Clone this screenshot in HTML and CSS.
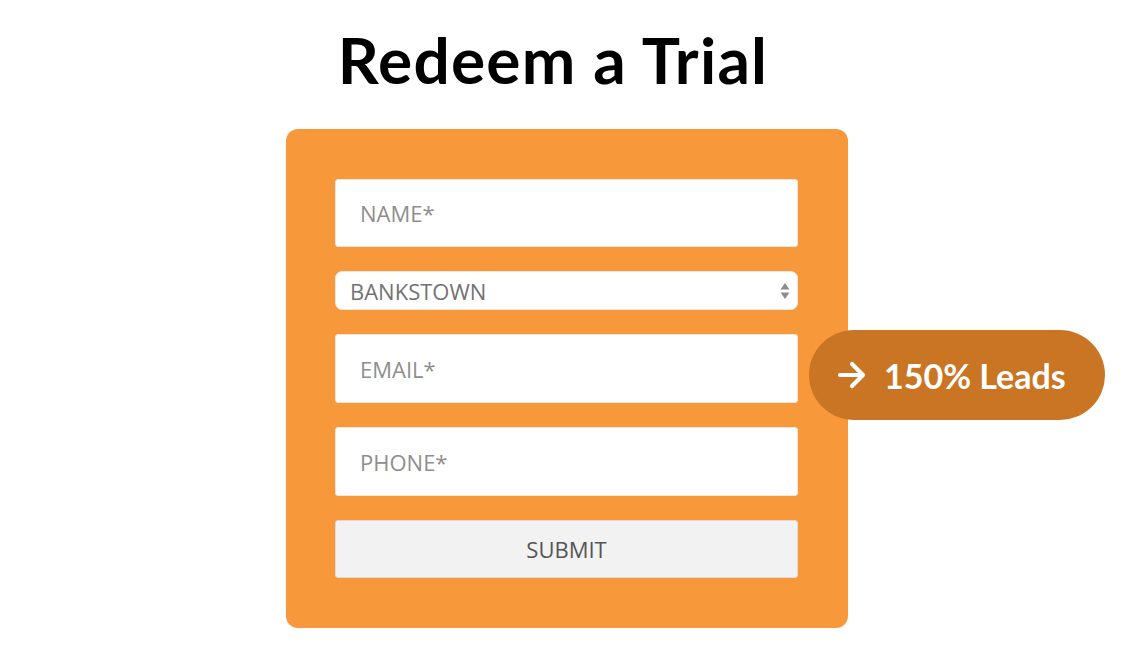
FILE: index.html
```html
<!DOCTYPE html>
<html lang="en">
<head>
    <meta charset="UTF-8">
    <meta name="viewport" content="width=device-width, initial-scale=1.0">
    <title>Redeem a Trial</title>
    <link rel="stylesheet" href="styles.css">
</head>
<body>
    <h1 class="title">Redeem a Trial</h1>
    <div class="card">
        <form class="trial-form" onsubmit="return false">
            <input class="field field-name" type="text" name="name" placeholder="NAME*">
            <div class="select-wrap">
                <select class="location" name="location">
                    <option>BANKSTOWN</option>
                </select>
                <svg class="select-arrows" width="10" height="18" viewBox="0 0 10 18">
                    <path d="M5 1 L9.5 7.5 L0.5 7.5 Z" fill="#8c8c8c"/>
                    <path d="M5 17 L9.5 10.5 L0.5 10.5 Z" fill="#8c8c8c"/>
                </svg>
            </div>
            <input class="field" type="email" name="email" placeholder="EMAIL*">
            <input class="field" type="tel" name="phone" placeholder="PHONE*">
            <button class="submit" type="submit">SUBMIT</button>
        </form>
        <!-- badge hangs over the right edge of the card -->
        <div class="leads-badge">
            <svg class="arrow" width="30" height="28" viewBox="0 0 30 28">
                <path d="M3 14 H26 M15 3 L26 14 L15 25" fill="none" stroke="#fff" stroke-width="4.2" stroke-linecap="round" stroke-linejoin="round"/>
            </svg>
            <span>150% Leads</span>
        </div>
    </div>
</body>
</html>
```

FILE: styles.css
```css
body {
    margin: 0;
    padding: 0;
    background-color: #fff;
    font-family: 'Open Sans', 'Liberation Sans', sans-serif;
    display: flex;
    flex-direction: column;
    align-items: center;
}
.title {
    font-family: 'Lato', 'Liberation Sans', sans-serif;
    font-weight: 700;
    font-size: 64px;
    line-height: 76px;
    letter-spacing: 1.2px;
    color: #000;
    margin: 22px 26px 31px 0;
}
.card {
    position: relative;
    width: 562px;
    box-sizing: border-box;
    padding: 50px 50px 50px 49px;
    background-color: #f7993a;
    border-radius: 12px;
    margin-left: 2px;
}
.trial-form {
    display: flex;
    flex-direction: column;
    gap: 24px;
}
.field {
    height: 69px;
    box-sizing: border-box;
    padding: 0 24px;
    border: 1px solid #f1e6da;
    border-radius: 3px;
    background-color: #fff;
    font-family: 'Open Sans', sans-serif;
    font-size: 22px;
    color: #555;
    outline: none;
}
.field-name {
    height: 68px;
}
.field::placeholder {
    color: #8e8e8e;
}
.select-wrap {
    position: relative;
    height: 39px;
}
.location {
    -webkit-appearance: none;
    appearance: none;
    width: 100%;
    height: 39px;
    padding: 0 14px;
    border: 1px solid #f1e6da;
    border-radius: 7px;
    background-color: #fff;
    font-family: 'Open Sans', sans-serif;
    font-size: 22px;
    color: #737373;
    outline: none;
}
.select-arrows {
    position: absolute;
    right: 8px;
    top: 11px;
}
.submit {
    height: 58px;
    border: 1px solid #dcdcdc;
    border-radius: 3px;
    background-color: #f2f2f2;
    font-family: 'Open Sans', sans-serif;
    font-size: 22px;
    color: #555;
    cursor: pointer;
}
.leads-badge {
    position: absolute;
    left: 523px;
    top: 201px;
    width: 296px;
    height: 90px;
    box-sizing: border-box;
    padding-left: 28px;
    border-radius: 45px;
    background-color: #c97524;
    display: flex;
    align-items: center;
    gap: 17px;
    color: #fff;
    font-family: 'Lato', sans-serif;
    font-weight: 700;
    font-size: 34px;
}
.leads-badge .arrow {
    flex-shrink: 0;
}
```
